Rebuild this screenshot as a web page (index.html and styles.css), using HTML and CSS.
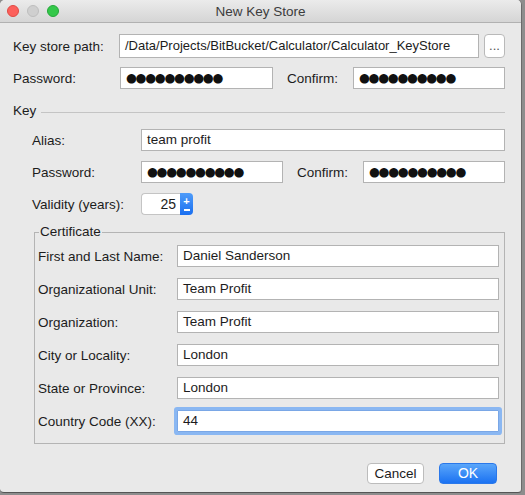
FILE: index.html
```html
<!DOCTYPE html>
<html>
<head>
<meta charset="utf-8">
<link rel="stylesheet" href="styles.css">
</head>
<body>
<div class="window">
  <div class="titlebar">
    <div class="lights">
      <span class="light red"></span>
      <span class="light gray"></span>
      <span class="light green"></span>
    </div>
    <div class="title">New Key Store</div>
  </div>
  <div class="content">
    <div class="row row-path">
      <div class="lbl w106">Key store path:</div>
      <div class="field path">/Data/Projects/BitBucket/Calculator/Calculator_KeyStore</div>
      <div class="browse">...</div>
    </div>
    <div class="row row-pw">
      <div class="lbl w107">Password:</div>
      <div class="field pw153 dots">●●●●●●●●●●</div>
      <div class="lbl confirm">Confirm:</div>
      <div class="field pw152 dots">●●●●●●●●●●</div>
    </div>
    <div class="keyhead">
      <span class="keylbl">Key</span>
      <span class="keyline"></span>
    </div>
    <div class="keyrows">
      <div class="row krow">
        <div class="lbl w109">Alias:</div>
        <div class="field grow">team profit</div>
      </div>
      <div class="row krow">
        <div class="lbl w109">Password:</div>
        <div class="field pw142 dots">●●●●●●●●●●</div>
        <div class="lbl confirm">Confirm:</div>
        <div class="field pw142 dots">●●●●●●●●●●</div>
      </div>
      <div class="row krow">
        <div class="lbl w109">Validity (years):</div>
        <div class="spinner">
          <div class="spin-val">25</div>
          <div class="spin-btn"><span class="plus">+</span><span class="minus"></span></div>
        </div>
      </div>
      <fieldset class="cert">
        <legend>Certificate</legend>
        <div class="row crow first">
          <div class="lbl w139">First and Last Name:</div>
          <div class="field grow">Daniel Sanderson</div>
        </div>
        <div class="row crow">
          <div class="lbl w139">Organizational Unit:</div>
          <div class="field grow">Team Profit</div>
        </div>
        <div class="row crow">
          <div class="lbl w139">Organization:</div>
          <div class="field grow">Team Profit</div>
        </div>
        <div class="row crow">
          <div class="lbl w139">City or Locality:</div>
          <div class="field grow">London</div>
        </div>
        <div class="row crow">
          <div class="lbl w139">State or Province:</div>
          <div class="field grow">London</div>
        </div>
        <div class="row crow">
          <div class="lbl w139">Country Code (XX):</div>
          <div class="field grow focus">44</div>
        </div>
      </fieldset>
    </div>
    <div class="buttons">
      <div class="btn cancel">Cancel</div>
      <div class="btn ok">OK</div>
    </div>
  </div>
</div>
</body>
</html>
```
FILE: styles.css
```css
* { box-sizing: border-box; }
html, body { margin: 0; padding: 0; }
body {
  width: 525px;
  height: 495px;
  background: #8d8d8d;
  font-family: "Liberation Sans", Arial, sans-serif;
  font-size: 13.5px;
  color: #1c1c1c;
  overflow: hidden;
}
.window {
  width: 522px;
  height: 493px;
  background: #e9e9e9;
  border-radius: 5px 5px 4px 4px;
  overflow: hidden;
  border-bottom: 1px solid #555;
  border-right: 1px solid #6a6a6a;
}
.titlebar {
  height: 23px;
  background: linear-gradient(#ebebeb, #d5d5d5);
  border-bottom: 1px solid #b1b1b1;
  display: flex;
  align-items: center;
  position: relative;
}
.lights {
  display: flex;
  gap: 8px;
  padding-left: 7px;
}
.light {
  width: 12px;
  height: 12px;
  border-radius: 50%;
  display: block;
}
.red { background: #fc605b; border: 1px solid #de4a44; }
.gray { background: #cfcfcf; border: 1px solid #bdbdbd; }
.green { background: #34c84a; border: 1px solid #25a73a; }
.title {
  position: absolute;
  left: 0; right: 0; top: 0;
  height: 22px;
  line-height: 24px;
  text-align: center;
  color: #3c3c3c;
  font-size: 13.5px;
}
.content {
  padding: 0 16px 0 13px;
}
.row { display: flex; align-items: center; }
.lbl { flex: none; white-space: nowrap; }
.w106 { width: 106px; }
.w107 { width: 107px; }
.w109 { width: 109px; }
.w139 { width: 139px; }
.field {
  background: #fff;
  border: 1px solid #b3b3b3;
  height: 22px;
  line-height: 20px;
  padding: 0 5px;
  white-space: nowrap;
  overflow: hidden;
  flex: none;
}
.grow { flex: 1; }
.row-path { margin-top: 11px; }
.path { width: 360px; height: 24px; line-height: 22px; font-size: 13px; }
.browse {
  margin-left: 5px;
  width: 21px;
  height: 24px;
  border: 1px solid #b9b9b9;
  border-radius: 4px;
  background: #fff;
  text-align: center;
  line-height: 22px;
  color: #555;
  font-size: 13px;
}
.row-pw { margin-top: 9px; }
.pw153 { width: 153px; }
.pw152 { width: 152px; }
.pw142 { width: 142px; }
.confirm { width: 66px; margin-left: 14px; }
.dots {
  font-family: "DejaVu Sans", sans-serif;
  font-size: 12.5px;
  letter-spacing: -1.3px;
  color: #111;
  line-height: 20px;
}
.keyhead {
  display: flex;
  align-items: center;
  margin-top: 13px;
  height: 17px;
}
.keylbl { width: 28px; }
.keyline { flex: 1; height: 1px; background: #c4c4c4; margin-top: 3px; }
.keyrows { padding-left: 19px; }
.krow { margin-top: 10px; }
.krow:first-child { margin-top: 10px; }
.spinner { display: flex; height: 22px; }
.spin-val {
  width: 39px;
  background: #fff;
  border: 1px solid #c4c4c4;
  border-right: none;
  border-radius: 4px 0 0 4px;
  text-align: right;
  padding-right: 4px;
  line-height: 20px;
  font-size: 14px;
}
.spin-btn {
  width: 13px;
  background: linear-gradient(#4f9cf9, #1a6ff0);
  border-radius: 0 4px 4px 0;
  display: flex;
  flex-direction: column;
  align-items: center;
  justify-content: center;
  gap: 2px;
}
.plus { color: #fff; font-size: 11px; line-height: 8px; font-weight: bold; }
.minus { width: 6px; height: 1.5px; background: #fff; margin-top: 2px; }
.cert {
  margin: 10px 0 0 2px;
  padding: 0 5px 11px 3px;
  border: 1px solid #b4b4b4;
  min-width: 0;
}
.cert legend {
  padding: 0 1px;
  margin-left: 1px;
  line-height: 14px;
}
.crow { margin-top: 11px; }
.crow.first { margin-top: 6px; }
.focus {
  border-color: #7aa7e6;
  box-shadow: 0 0 0 3px #8ab7f2;
  border-radius: 1px;
}
.buttons {
  display: flex;
  justify-content: flex-end;
  gap: 15px;
  padding-right: 8px;
  margin-top: 19px;
}
.btn {
  height: 21px;
  line-height: 19px;
  text-align: center;
  border-radius: 4px;
}
.cancel {
  width: 57px;
  background: #fff;
  border: 1px solid #bcbcbc;
}
.ok {
  width: 58px;
  background: linear-gradient(#5aa6fa, #1b72f2);
  border: 1px solid #2a78ea;
  color: #fff;
  font-size: 14px;
}
```
